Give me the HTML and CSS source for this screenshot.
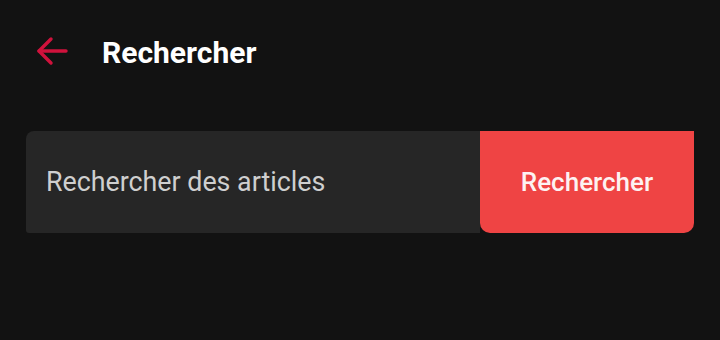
FILE: index.html
```html
<!DOCTYPE html>
<html lang="fr">
<head>
<meta charset="utf-8">
<link rel="stylesheet" href="styles.css">
</head>
<body>
<div class="page">
  <header class="topbar">
    <button class="back" aria-label="Retour">
      <svg width="32" height="30" viewBox="0 0 32 30" fill="none" stroke="#d0123c" stroke-width="3.4" stroke-linecap="round" stroke-linejoin="round">
        <path d="M30 15H3"/>
        <path d="M15 3L3 15l12 12"/>
      </svg>
    </button>
    <h1 class="title">Rechercher</h1>
  </header>
  <form class="search">
    <input class="search-input" type="text" placeholder="Rechercher des articles">
    <button class="search-btn" type="button">Rechercher</button>
  </form>
</div>
</body>
</html>
```
FILE: styles.css
```css
html, body {
  margin: 0;
  padding: 0;
  background: #121212;
  width: 720px;
  height: 340px;
  overflow: hidden;
}
.page {
  font-family: Roboto, "Noto Sans", sans-serif;
  padding: 36px 26px 0 26px;
}
.topbar {
  display: flex;
  align-items: center;
  height: 30px;
}
.back {
  background: none;
  border: none;
  padding: 0;
  margin: 0 0 0 10px;
  width: 32px;
  height: 30px;
  display: flex;
}
.title {
  margin: 0 0 0 34px;
  color: #ffffff;
  font-size: 30px;
  font-weight: 700;
  line-height: 30px;
  position: relative;
  top: 2px;
}
.search {
  display: flex;
  margin-top: 65px;
  width: 668px;
  height: 102px;
}
.search-input {
  flex: 1;
  min-width: 0;
  box-sizing: border-box;
  height: 100%;
  background: #262626;
  border: none;
  outline: none;
  border-radius: 8px 0 0 3px;
  padding: 0 20px;
  font-family: Roboto, "Noto Sans", sans-serif;
  font-size: 26.8px;
  color: #e0e0e0;
}
.search-input::placeholder {
  color: #cfcfcf;
}
.search-btn {
  width: 214px;
  height: 100%;
  background: #ef4444;
  border: none;
  border-radius: 0 0 10px 10px;
  color: #fdf2f2;
  font-family: Roboto, "Noto Sans", sans-serif;
  font-size: 26px;
  font-weight: 500;
  padding: 0;
}
```
